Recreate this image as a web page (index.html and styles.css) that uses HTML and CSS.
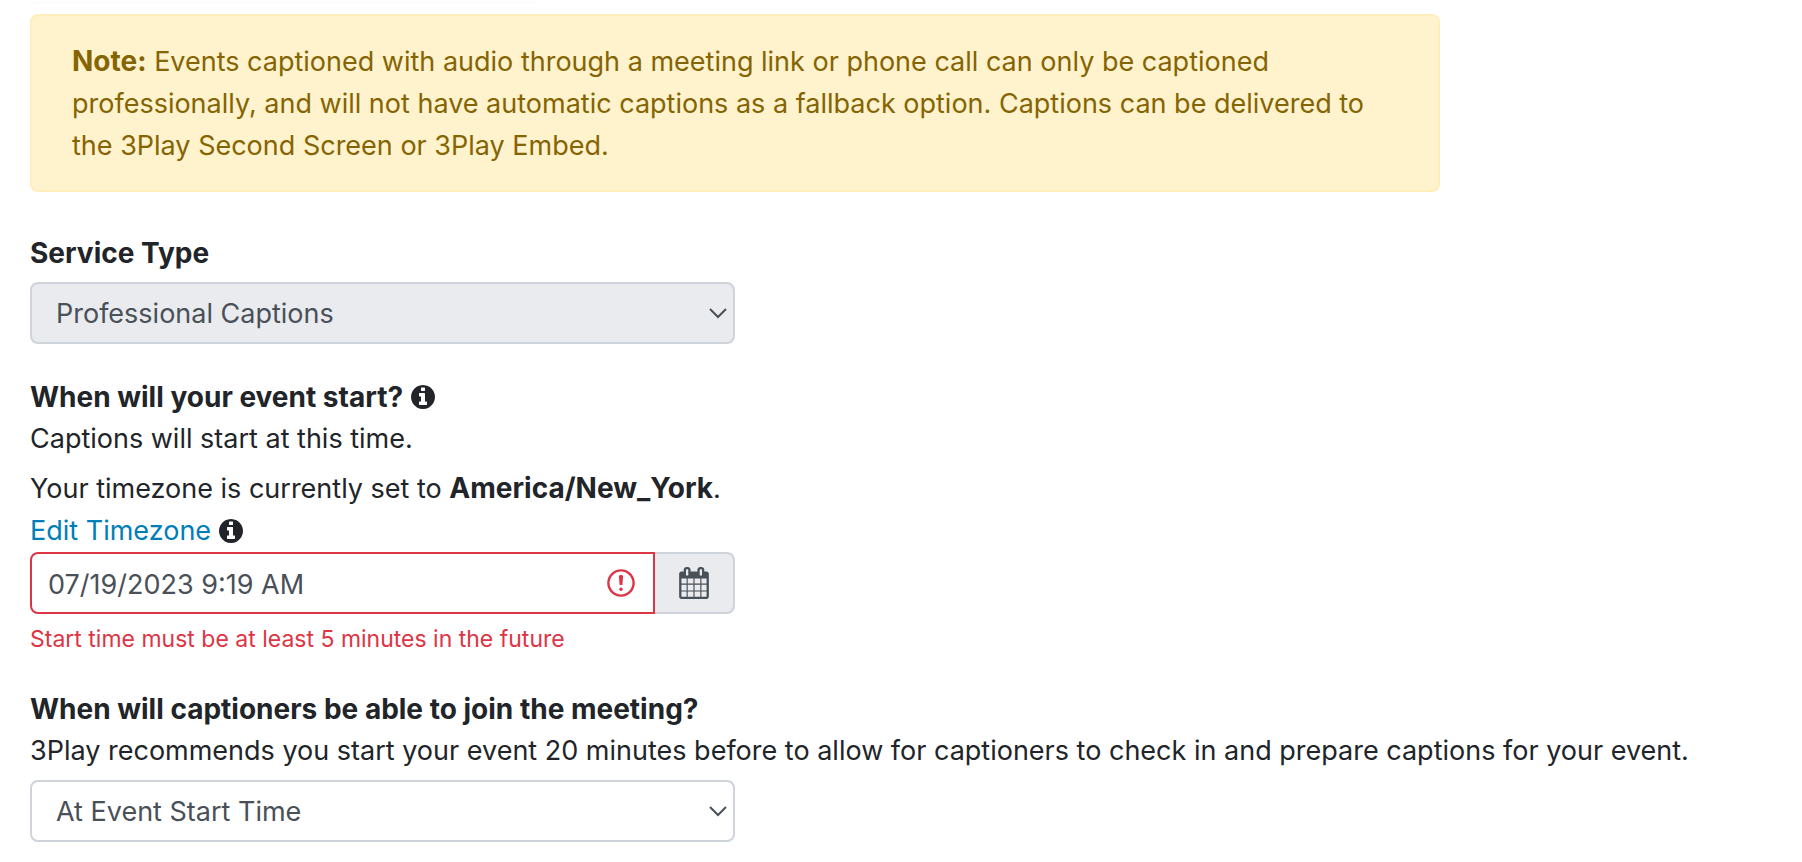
FILE: index.html
```html
<!DOCTYPE html>
<html lang="en">
<head>
<meta charset="utf-8">
<title>Schedule event</title>
<link rel="stylesheet" href="styles.css">
</head>
<body>
<svg class="sprite" aria-hidden="true">
  <symbol id="info" viewBox="128 128 1536 1536"><path d="M1152 1376v-160q0-14-9-23t-23-9h-96v-512q0-14-9-23t-23-9h-320q-14 0-23 9t-9 23v160q0 14 9 23t23 9h96v320h-96q-14 0-23 9t-9 23v160q0 14 9 23t23 9h448q14 0 23-9t9-23zm-128-896v-160q0-14-9-23t-23-9h-192q-14 0-23 9t-9 23v160q0 14 9 23t23 9h192q14 0 23-9t9-23zm640 416q0 209-103 385.5t-279.5 279.5-385.5 103-385.5-103-279.5-279.5-103-385.5 103-385.5 279.5-279.5 385.5-103 385.5 103 279.5 279.5 103 385.5z"/></symbol>
  <symbol id="chevron" viewBox="0 0 18 12"><path d="M1 2l8 8 8-8" fill="none" stroke="currentColor" stroke-width="2"/></symbol>
</svg>
<main class="page">
  <div class="card-edge"></div>
  <div class="alert" role="note"><strong>Note:</strong> Events captioned with audio through a meeting link or phone call can only be captioned professionally, and will not have automatic captions as a fallback option. Captions can be delivered to the 3Play Second Screen or 3Play Embed.</div>
  <form class="form">
    <div class="group">
      <label class="label label-spaced" for="service">Service Type</label>
      <div class="select-wrap">
        <select class="control select" id="service" disabled><option>Professional Captions</option></select>
        <svg class="chevron" aria-hidden="true"><use href="#chevron"/></svg>
      </div>
    </div>
    <div class="group">
      <div class="line"><label class="label" for="start">When will your event start?</label><svg class="info"><use href="#info"/></svg></div>
      <p class="text text-spaced">Captions will start at this time.</p>
      <p class="text">Your timezone is currently set to <strong>America/New_York</strong>.</p>
      <div class="line"><a class="link" href="#timezone">Edit Timezone</a><svg class="info"><use href="#info"/></svg></div>
      <div class="input-group">
        <input class="control input" id="start" type="text" value="07/19/2023 9:19 AM" aria-invalid="true" aria-describedby="start-error">
        <svg class="invalid" viewBox="0 0 28 28" aria-hidden="true"><circle cx="14" cy="14" r="12.6" fill="none" stroke="currentColor" stroke-width="2.4"/><path d="M11.9 7.6a1.5 1.5 0 0 1 1.5-1.6h1.2a1.5 1.5 0 0 1 1.5 1.6l-.7 8.4h-2.8z" fill="currentColor"/><circle cx="14" cy="20.2" r="1.7" fill="currentColor"/></svg>
        <button class="calendar-button" type="button" aria-label="Choose date"><svg class="calendar" viewBox="0 0 1792 1792"><path d="M192 1664h288v-288h-288v288zm352 0h320v-288h-320v288zm-352-352h288v-320h-288v320zm352 0h320v-320h-320v320zm-352-384h288v-288h-288v288zm736 736h320v-288h-320v288zm-384-736h320v-288h-320v288zm768 736h288v-288h-288v288zm-384-352h320v-320h-320v320zm-352-864v-288q0-13-9.5-22.5t-22.5-9.5h-64q-13 0-22.5 9.5t-9.5 22.5v288q0 13 9.5 22.5t22.5 9.5h64q13 0 22.5-9.5t9.5-22.5zm736 864h288v-320h-288v320zm-384-384h320v-288h-320v288zm384 0h288v-288h-288v288zm32-480v-288q0-13-9.5-22.5t-22.5-9.5h-64q-13 0-22.5 9.5t-9.5 22.5v288q0 13 9.5 22.5t22.5 9.5h64q13 0 22.5-9.5t9.5-22.5zm384-64v1280q0 52-38 90t-90 38h-1408q-52 0-90-38t-38-90v-1280q0-52 38-90t90-38h128v-96q0-66 47-113t113-47h64q66 0 113 47t47 113v96h384v-96q0-66 47-113t113-47h64q66 0 113 47t47 113v96h128q52 0 90 38t38 90z"/></svg></button>
      </div>
      <p class="error" id="start-error">Start time must be at least 5 minutes in the future</p>
    </div>
    <div class="group">
      <label class="label" for="join">When will captioners be able to join the meeting?</label>
      <p class="text text-spaced">3Play recommends you start your event 20 minutes before to allow for captioners to check in and prepare captions for your event.</p>
      <div class="select-wrap">
        <select class="control select" id="join"><option>At Event Start Time</option></select>
        <svg class="chevron" aria-hidden="true"><use href="#chevron"/></svg>
      </div>
    </div>
  </form>
</main>
</body>
</html>
```
FILE: styles.css
```css
* { box-sizing: border-box; }

body {
  margin: 0;
  background: #fff;
  color: #212529;
  font-family: Inter, "Liberation Sans", sans-serif;
  font-size: 27px;
  line-height: 42px;
}

p { margin: 0; }
strong { font-size: 28px; font-weight: 700; line-height: 1; }
.sprite { display: none; }

.page {
  display: flex;
  flex-direction: column;
  padding: 0 30px 20px;
}

.card-edge {
  width: 100%;
  max-width: 504px;
  height: 1px;
  margin-bottom: 13px;
  box-shadow: 0 0 5px rgba(0, 0, 0, 0.12);
}

.alert {
  max-width: 1410px;
  padding: 25px 40px 23px;
  border: 2px solid #ffeeba;
  border-radius: 8px;
  background: #fff3cd;
  color: #856404;
}

.form {
  display: flex;
  flex-direction: column;
  gap: 32px;
  padding-top: 40px;
}

.group { display: flex; flex-direction: column; }
.label { font-size: 28px; font-weight: 700; }
.label-spaced, .text-spaced { margin-bottom: 8px; }
.line { display: flex; align-items: center; gap: 8px; }
.info { width: 24px; height: 24px; fill: currentColor; }
.link { color: #007eb8; text-decoration: none; }

.select-wrap, .input-group {
  position: relative;
  display: flex;
  width: 100%;
  max-width: 705px;
  color: #495057;
}

.control {
  width: 100%;
  min-width: 0;
  height: 62px;
  margin: 0;
  border: 2px solid #ced4da;
  border-radius: 8px;
  background: #fff;
  color: #495057;
  font: inherit;
  appearance: none;
}

.select { padding: 2px 40px 0 24px; }
.select:disabled { background: #e9ebef; opacity: 1; }

.chevron {
  position: absolute;
  right: 8px;
  top: 25px;
  width: 18px;
  height: 12px;
  pointer-events: none;
}

.input {
  flex: 1;
  padding: 2px 60px 0 16px;
  border-color: #dc3545;
  border-radius: 8px 0 0 8px;
}

.invalid {
  position: absolute;
  right: 100px;
  top: 17px;
  width: 28px;
  height: 28px;
  color: #dc3545;
}

.calendar-button {
  display: flex;
  align-items: center;
  justify-content: center;
  width: 80px;
  padding: 0;
  border: 2px solid #ced4da;
  border-left: 0;
  border-radius: 0 8px 8px 0;
  background: #e9ebef;
  color: #495057;
}

.calendar { width: 32px; height: 32px; fill: currentColor; }

.error {
  padding-top: 8px;
  color: #dc3545;
  font-size: 23px;
  line-height: 34px;
}
```
